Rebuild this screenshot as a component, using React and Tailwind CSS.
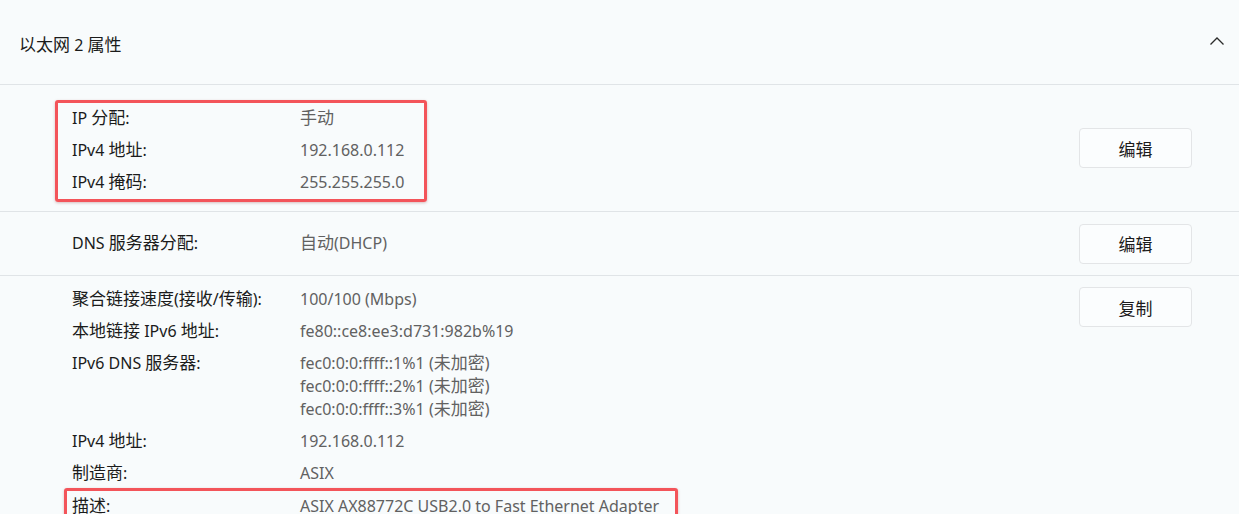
const FONT = { fontFamily: '"Noto Sans", "Noto Sans CJK SC", sans-serif' };

// CJK runs are drawn a bit bigger than the latin text, like the screenshot
function T({ children }) {
  const parts = String(children).split(/([\u3400-\u9fff\uff08-\uff1a]+)/);
  return (
    <>
      {parts.map((p, i) =>
        i % 2 === 1 ? (
          <span
            key={i}
            className="text-[17px] leading-none"
            style={{ fontFamily: '"Noto Sans CJK SC", sans-serif' }}
          >
            {p}
          </span>
        ) : (
          <span key={i}>{p}</span>
        )
      )}
    </>
  );
}

function Row({ label, values }) {
  return (
    <div className="flex pt-[4px] pb-[5px]">
      <div className="w-[228px] shrink-0 h-[23px] leading-[23px] text-[#1b1b1b] whitespace-nowrap">
        <T>{label}</T>
      </div>
      <div className="flex flex-col text-[#616161] whitespace-nowrap">
        {values.map((v, i) => (
          <div key={i} className="h-[23px] leading-[23px]">
            <T>{v}</T>
          </div>
        ))}
      </div>
    </div>
  );
}

function Btn({ text, className = "" }) {
  return (
    <button
      className={
        "w-[113px] h-[40px] shrink-0 rounded-[4px] border border-[#e3e5e7] bg-[#fbfdfe] text-[#1b1b1b] flex items-center justify-center " +
        className
      }
    >
      <T>{text}</T>
    </button>
  );
}

function RedBox({ className = "", children }) {
  return (
    <div
      className={
        "border-[3px] border-[#f3545a] rounded-[3px] shadow-[0_1px_3px_rgba(120,0,0,0.25)] " + className
      }
    >
      {children}
    </div>
  );
}

export default function App() {
  return (
    <div className="w-[1239px] h-[514px] overflow-hidden bg-[#f8fbfc] text-[16px]" style={FONT}>
      <div className="h-[85px] flex items-center justify-between pl-[19px] pr-[14px] border-b border-[#e0e4e7]">
        <div className="h-[23px] leading-[23px] text-[#1b1b1b] mt-[6px]">
          <T>以太网 2 属性</T>
        </div>
        <svg width="16" height="10" viewBox="0 0 16 10" className="mt-[-3px]">
          <path d="M1.5 8.5 L8 2 L14.5 8.5" fill="none" stroke="#2b2b2b" strokeWidth="1.3" />
        </svg>
      </div>

      <div className="flex items-center justify-between pl-[55px] pr-[47px] pt-[15px] pb-[9px] border-b border-[#e0e4e7]">
        <RedBox className="w-[372px] pl-[14px]">
          <Row label="IP 分配:" values={["手动"]} />
          <Row label="IPv4 地址:" values={["192.168.0.112"]} />
          <Row label="IPv4 掩码:" values={["255.255.255.0"]} />
        </RedBox>
        <Btn text="编辑" className="-mt-[6px]" />
      </div>

      <div className="h-[64px] flex items-center justify-between pl-[72px] pr-[47px] border-b border-[#e0e4e7]">
        <Row label="DNS 服务器分配:" values={["自动(DHCP)"]} />
        <Btn text="编辑" />
      </div>

      <div className="flex justify-between pl-[72px] pr-[47px] pt-[8px]">
        <div className="flex flex-col">
          <Row label="聚合链接速度(接收/传输):" values={["100/100 (Mbps)"]} />
          <Row label="本地链接 IPv6 地址:" values={["fe80::ce8:ee3:d731:982b%19"]} />
          <Row
            label="IPv6 DNS 服务器:"
            values={[
              "fec0:0:0:ffff::1%1 (未加密)",
              "fec0:0:0:ffff::2%1 (未加密)",
              "fec0:0:0:ffff::3%1 (未加密)",
            ]}
          />
          <Row label="IPv4 地址:" values={["192.168.0.112"]} />
          <Row label="制造商:" values={["ASIX"]} />
          <RedBox className="w-[614px] -ml-[8px] -mt-[2px] pl-[5px]">
            <Row label="描述:" values={["ASIX AX88772C USB2.0 to Fast Ethernet Adapter"]} />
          </RedBox>
        </div>
        <Btn text="复制" className="mt-[3px]" />
      </div>
    </div>
  );
}
